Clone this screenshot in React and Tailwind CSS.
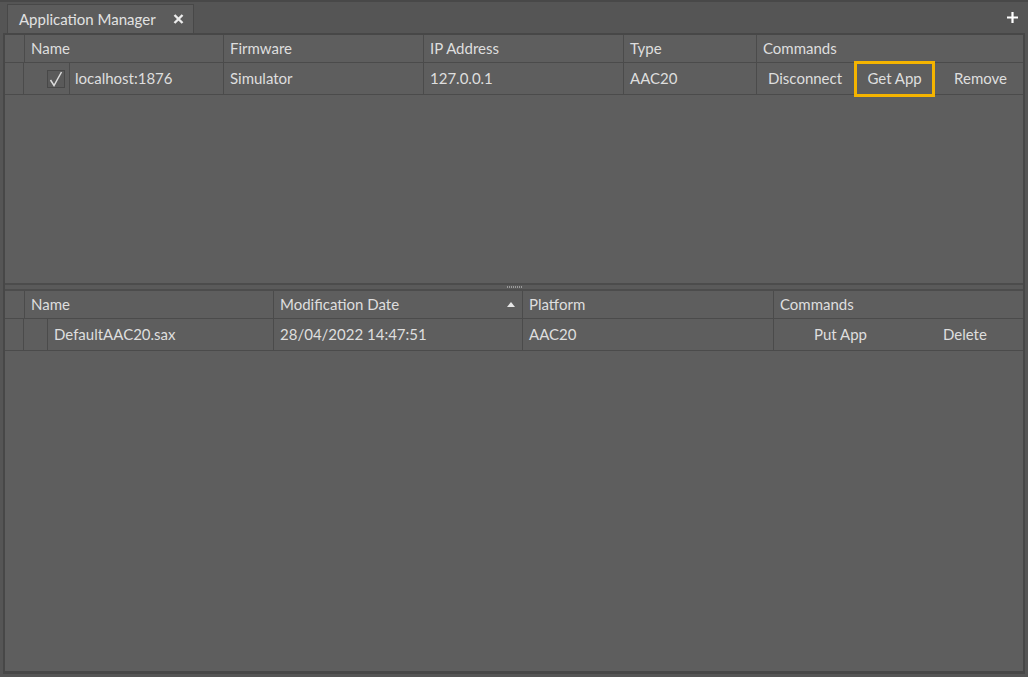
import React from "react";

const font = { fontFamily: "Lato, 'Open Sans', sans-serif" };

const deviceCols = "grid-cols-[19px_199px_200px_200px_133px_1fr]";
const fileCols = "grid-cols-[19px_249px_249px_251px_1fr]";

function Cell({ children }) {
  return (
    <div className="flex h-full items-center border-l border-[#4b4b4b] px-[6px] text-[15px] text-[#dedede]">
      {children}
    </div>
  );
}

function Check() {
  return (
    <span className="flex h-[18px] w-[18px] items-center justify-center border border-[#484848] bg-[#5a5a5a]">
      <svg width="14" height="16" viewBox="0 0 14 16">
        <path d="M1.5 9 L5 14.5 L12.5 1" fill="none" stroke="#dcdcdc" strokeWidth="1.5" />
      </svg>
    </span>
  );
}

function DeviceTable() {
  return (
    <div className="h-[248px]">
      <div className={`grid ${deviceCols} auto-rows-[27px] border-b border-[#4b4b4b]`}>
        <div />
        <Cell>Name</Cell>
        <Cell>Firmware</Cell>
        <Cell>IP Address</Cell>
        <Cell>Type</Cell>
        <Cell>Commands</Cell>
      </div>
      <div className={`grid ${deviceCols} auto-rows-[31px] border-b border-[#4b4b4b] text-[15px] text-[#dedede]`}>
        <div className="border-r border-[#4b4b4b]" />
        <div className="flex h-full items-center">
          <div className="w-[23px]" />
          <Check />
          <div className="ml-[4px] flex h-full items-center border-l border-[#4b4b4b] pl-[5px]">
            localhost:1876
          </div>
        </div>
        <Cell>Simulator</Cell>
        <Cell>127.0.0.1</Cell>
        <Cell>AAC20</Cell>
        <div className="flex h-full items-center border-l border-[#4b4b4b] pl-[11px]">
          <span>Disconnect</span>
          <span className="ml-[12px] flex h-[36px] w-[81px] shrink-0 items-center justify-center border-[3px] border-[#f5b400]">
            Get App
          </span>
          <span className="ml-[19px]">Remove</span>
        </div>
      </div>
    </div>
  );
}

function FileTable() {
  return (
    <div className="flex-1">
      <div className={`grid ${fileCols} auto-rows-[27px] border-b border-[#4b4b4b]`}>
        <div />
        <Cell>Name</Cell>
        <div className="flex h-full items-center justify-between border-l border-[#4b4b4b] px-[6px] text-[15px] text-[#dedede]">
          <span>Modification Date</span>
          <svg width="8" height="5" viewBox="0 0 8 5" className="mr-[1px]">
            <path d="M0 5 L4 0 L8 5 Z" fill="#e6e6e6" />
          </svg>
        </div>
        <Cell>Platform</Cell>
        <Cell>Commands</Cell>
      </div>
      <div className={`grid ${fileCols} auto-rows-[31px] border-b border-[#4b4b4b] text-[15px] text-[#dedede]`}>
        <div className="border-r border-[#4b4b4b]" />
        <div className="flex h-full items-center">
          <div className="ml-[23px] flex h-full items-center border-l border-[#4b4b4b] pl-[6px]">
            DefaultAAC20.sax
          </div>
        </div>
        <Cell>28/04/2022 14:47:51</Cell>
        <Cell>AAC20</Cell>
        <div className="flex h-full items-center border-l border-[#4b4b4b]">
          <span className="ml-[40px]">Put App</span>
          <span className="ml-[76px]">Delete</span>
        </div>
      </div>
    </div>
  );
}

export default function App() {
  return (
    <div className="h-[677px] w-[1028px] overflow-hidden bg-[#555555]" style={font}>
      <div className="h-[2px] bg-[#484848]" />
      {/* Tab strip */}
      <div className="flex h-[31px] items-end justify-between pl-[7px] pr-[10px]">
        <div className="flex h-[29px] w-[187px] items-center justify-between border border-b-0 border-[#484848] bg-[#5c5c5c] pl-[11px] pr-[9px] text-[15px] text-[#e2e2e2]">
          <span>Application Manager</span>
          <svg width="11" height="10" viewBox="0 0 11 10">
            <path d="M1.5 1 L9.5 9 M9.5 1 L1.5 9" stroke="#ececec" strokeWidth="2.4" />
          </svg>
        </div>
        <svg width="11" height="11" viewBox="0 0 11 11" className="mb-[10px]">
          <path d="M5.5 0 V11 M0 5.5 H11" stroke="#ffffff" strokeWidth="2.2" />
        </svg>
      </div>
      {/* Manager panel */}
      <div className="mx-[3px] flex h-[641px] flex-col border-x-2 border-t-2 border-b-[3px] border-[#474747] bg-[#5e5e5e]">
        <DeviceTable />
        {/* Splitter */}
        <div className="relative h-[8px] border-y-2 border-[#4c4c4c] bg-[#5a5a5a]">
          <div className="absolute left-[502px] top-[1px] h-[2px] w-[16px] bg-[repeating-linear-gradient(90deg,#9a9a9a_0_1px,transparent_1px_2px)]" />
        </div>
        <FileTable />
      </div>
    </div>
  );
}
